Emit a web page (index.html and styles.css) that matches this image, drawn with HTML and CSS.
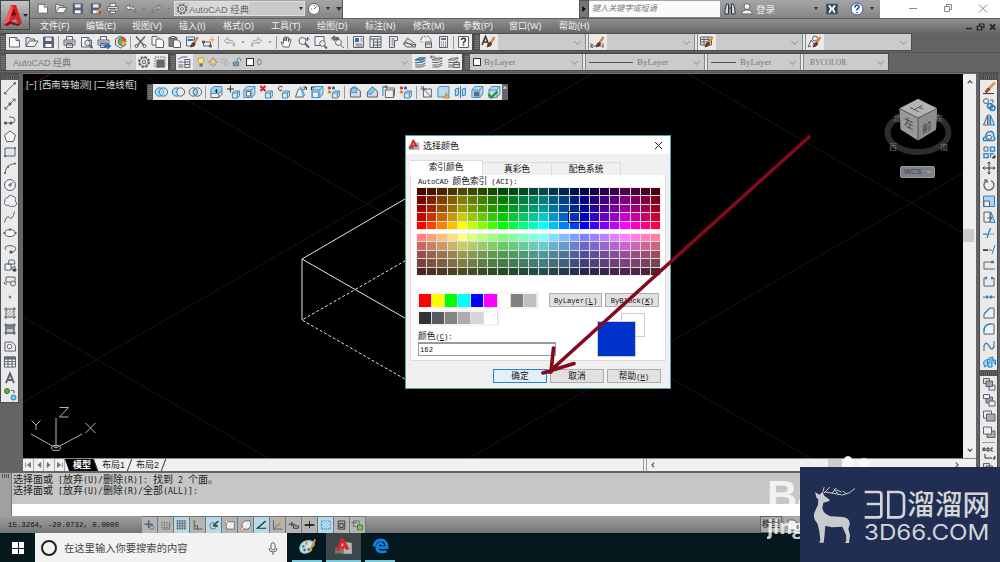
FILE: index.html
```
<!DOCTYPE html>
<html lang="zh-CN">
<head>
    <meta charset="UTF-8">
    <title>AutoCAD 经典</title>
    <link rel="stylesheet" href="styles.css">
</head>
<body>
    <div class="app">
        <header class="header">
            <div class="titlebar">
                <div class="quick" data-icons="new open save saveas print undoW caret redoG caret"></div>
                <div class="workspace"><span data-icons="gear"></span><span class="workspace-name">AutoCAD 经典</span><i class="tri"></i></div>
                <div class="quick-end"><span data-icons="compass"></span><i class="tri"></i><i class="tri big"></i></div>
                <div class="title-space"></div>
                <div class="search-arrow"><i></i></div>
                <div class="search">键入关键字或短语</div>
                <div class="account"><span data-icons="binocular user"></span><span class="login">登录</span><i class="tri"></i><span data-icons="exchange"></span><span class="help" data-icons="helpround"></span><i class="tri"></i></div>
                <div class="window-buttons" data-icons="min restore close"></div>
            </div>
            <nav class="menubar">
                <span>文件(F)</span><span>编辑(E)</span><span>视图(V)</span><span>插入(I)</span><span>格式(O)</span><span>工具(T)</span><span>绘图(D)</span><span>标注(N)</span><span>修改(M)</span><span>参数(P)</span><span>窗口(W)</span><span>帮助(H)</span>
                <div class="doc-buttons" data-icons="mini restore2 close2"></div>
            </nav>
            <div class="app-button">
                <svg width="29" height="30" viewBox="0 0 29 30"><path d="M3 24L10 4h5l6 18-4 1-2-5-6 2-1 4z" fill="#d8222a"/><path d="M10 4l2 2-5 18-4 0z" fill="#ff5a55"/><path d="M10 15l3-7 2 6z" fill="#5e0d12"/><path d="M3 24l6-4 8 3 4-1-4 3-8-2-2 2z" fill="#8e0c14"/><path d="M22 13h5l-2.500 3z" fill="#222"/></svg>
            </div>
        </header>

        <div class="toolrow">
            <div class="bar standard"><i class="grip"></i><div data-icons="new open save - print preview publish globe - cut copy paste brush block - undo caret redo caret - hand zoomrt zoomwin zoomprev - props center palette sheet markup calc - help"></div></div>
            <div class="bar styles"><i class="grip"></i><span data-icons="textstyle"></span><div class="combo"></div><i class="split"></i><span data-icons="dimstyle"></span><div class="combo"></div><i class="split"></i><span data-icons="tablestyle"></span><div class="combo"></div><i class="split"></i><span data-icons="leaderstyle"></span><div class="combo"></div></div>
        </div>
        <div class="toolrow">
            <div class="bar spaces"><i class="grip"></i><div class="combo">AutoCAD 经典</div><span data-icons="gear wssave"></span></div>
            <div class="bar layers"><i class="grip"></i><span data-icons="layerprops"></span><div class="combo"><span data-icons="bulb sun freeze lock"></span><i class="box"></i>0</div><span data-icons="layers layerprev layerstate"></span></div>
            <div class="bar object"><i class="grip"></i><div class="combo serif c1"><i class="box"></i>ByLayer</div><i class="split"></i><div class="combo serif c2"><i class="rule"></i>ByLayer</div><i class="split"></i><div class="combo serif c3"><i class="rule"></i>ByLayer</div><i class="split"></i><div class="combo serif c4">BYCOLOR</div></div>
        </div>

        <main class="workarea">
            <aside class="side left"><i class="side-grip"></i><div data-icons="line xline pline polygon rect arc circle cloud spline ellipse earc insert mkblock point hatch gradient region table mtext addsel"></div></aside>
            <section class="drawing">
                <svg class="model" width="940" height="384" viewBox="23 74 940 384">
                    <g class="guides">
                        <path d="M23 317L266 457M23 402L592 74M145 76L810 458M688 74L963 233M471 457L963 173"/>
                        <path d="M23 90L50 74" stroke="#6e1414"/>
                    </g>
                    <g fill="none" stroke="#e4e4e4">
                        <path d="M410 196L302 259V320M302 259L410 321"/>
                        <path d="M410 258L302 320L410 382" stroke-dasharray="3 2"/>
                    </g>
                    <g fill="none" stroke="#b4b4b4">
                        <path d="M56 418V448L82 434M56 448L31 434"/>
                        <ellipse cx="56" cy="448" rx="4.500" ry="2.600"/>
                        <path d="M59.500 407.500h9l-9 9.500h9M31.500 420.500l4.500 4.500l4.500-4.500M36 425v5M85.500 423l10 10M95.500 423l-10 10"/>
                    </g>
                    <g class="cube">
                        <ellipse cx="918" cy="132.500" rx="30.500" ry="19.500" fill="none" stroke="#2d2d2d" stroke-width="6"/>
                        <path d="M918 99l19 9.500-1 21-18 11-17.500-11-1-21z" fill="#999"/>
                        <path d="M918 99l19 9.500-19 9.500-18.500-9.500z" fill="#b2b2b2"/>
                        <path d="M918 118l19-9.500-1 21-18 11z" fill="#8d8d8d"/>
                        <path d="M899.500 108.500L918 118l19-9.500M918 118v22" fill="none" stroke="#555"/>
                        <text transform="matrix(.9 .45 -.9 .45 918 108)" x="-5.500" y="4">上</text>
                        <text transform="matrix(.86 .45 0 1 904 125)">左</text>
                        <text transform="matrix(.86 -.45 0 1 922 134)">前</text>
                        <g class="compass"><text x="889" y="150">西</text><text x="940" y="150">南</text><text x="893" y="121">北</text><text x="935" y="121">东</text></g>
                    </g>
                </svg>
                <span class="view-label">[−] [西南等轴测] [二维线框]</span>
                <span class="wcs">WCS<i></i></span>
                <div class="solid-bar"><i class="grip"></i><div data-icons="union subtract intersect - extrude movef offsetf delf rotf taperf copyf colorf - fillete chamfere copye colore - imprint clean separate shell check"></div><i class="solid-close">×</i></div>
            </section>
            <div class="vscroll"><span data-icons="up"></span><i></i><span data-icons="down"></span></div>
            <aside class="side right"><i class="side-grip"></i><div data-icons="erase copyobj mirror offset array move rotate scale stretch trim extend breakpt break join chamfer fillet blend explode"></div><i class="side-grip"></i><div data-icons="front back above under - abc front"></div></aside>
            <div class="tabs"><span class="nav"><b data-icons="first"></b><b data-icons="prev"></b><b data-icons="next"></b><b data-icons="last"></b></span><span class="tab active"><em>模型</em></span><span class="tab"><em>布局1</em></span><span class="tab"><em>布局2</em></span><div class="hscroll"><span data-icons="lt"></span><i></i><span data-icons="gt"></span></div></div>
        </main>

        <section class="command">
            <i class="command-grip"></i>
            <div class="history">
                <p>选择面或<b> [</b>放弃<b>(U)/</b>删除<b>(R)]: </b>找到<b> 2 </b>个面。</p>
                <p>选择面或<b> [</b>放弃<b>(U)/</b>删除<b>(R)/</b>全部<b>(ALL)]:</b></p>
            </div>
            <div class="prompt"></div>
        </section>

        <footer class="status">
            <span class="coords">15.3264, -20.0732, 0.0000</span>
            <div class="toggles" data-icons="infer snap grid* ortho polar* osnap 3dosnap otrack* ducs dyn lwt tpy* qp sc"></div>
            <span class="model-toggle">模型</span><span class="layout-toggle" data-icons="leaf"></span>
        </footer>

        <footer class="taskbar">
            <span class="start"><i></i><i></i><i></i><i></i></span>
            <div class="tasksearch"><i class="ring"></i>在这里输入你要搜索的内容<span data-icons="mic"></span></div>
            <span class="task" data-icons="paint"></span>
            <span class="task current" data-icons="acad"></span>
            <span class="task" data-icons="edge"></span>
        </footer>
    </div>

    <div class="dialog">
        <div class="dialog-title"><span data-icons="acad"></span>选择颜色<svg width="9" height="9" viewBox="0 0 9 9"><path d="M1 1l7 7M8 1L1 8" stroke="#222"/></svg></div>
        <div class="dialog-tabs"><span class="on">索引颜色</span><span>真彩色</span><span>配色系统</span></div>
        <div class="panel">
            <div class="aci-label"><b>AutoCAD </b>颜色索引<b> (ACI):</b></div>
            <div class="palette" id="paletteEven"></div>
            <div class="palette" id="paletteOdd"></div>
            <div class="pick-row">
                <div class="chips" id="chips"></div>
                <button><b>ByLayer(<u>L</u>)</b></button><button><b>ByBlock(<u>K</u>)</b></button>
            </div>
            <div class="lower">
                <div class="lower-left">
                    <div class="chips" id="grays"></div>
                    <label>颜色<b>(<u>C</u>):</b></label>
                    <div class="color-input"><b>162</b></div>
                </div>
                <div class="swatches"><i class="old"></i><i class="new"></i></div>
            </div>
        </div>
        <div class="actions"><button class="ok">确定</button><button>取消</button><button>帮助<b>(<u>H</u>)</b></button></div>
    </div>

    <svg class="arrow" width="280" height="250" viewBox="535 130 280 250"><path d="M809 137L676 257L549 372M553.500 348L551 372M543 373L574 363.500" fill="none" stroke="#830a1c" stroke-width="3.600" stroke-linecap="round"/></svg>

    <div class="paws"><i></i><i></i></div>
    <div class="baidu"><b>Ba</b><span>jing</span></div>
    <svg class="brand" width="200" height="95" viewBox="180 81 600 285">
        <rect x="180" y="81" width="600" height="285" fill="#202e54"/>
        <path d="M225 156l13 8 9-7 6 10 16 12-2 5-17 4-3 16c2 12 10 19 24 25l38 2c16 3 21 11 20 23l-4 12 5 20-3 23h-12l4-7-1-18-11-24-32 2-19-5-2 24-3 27h-13l3-9-3-25-6-24c-10-12-12-20-9-32l11-24 1-17-5-2z" fill="#c9cbcc"/>
        <path d="M247 161l5-18M252 159l17-17M256 156l24 4 27 5 22-7 15-12M276 160l12-15M295 163l-13-16M290 150l14 6M318 161l-9-8" fill="none" stroke="#c9cbcc" stroke-width="3" stroke-linecap="round"/>
        <g fill="none" stroke="#d3d5d6" stroke-width="8"><path d="M374 156h42q8 0 8 8v60q0 8-8 8h-42M380 192h44M445 156h30q17 0 17 17v42q0 17-17 17h-30z"/></g>
        <text x="502" y="226" textLength="248" lengthAdjust="spacingAndGlyphs" font-size="86">溜溜网</text>
        <text x="372" y="300" textLength="376" lengthAdjust="spacingAndGlyphs" font-size="63" class="site">3D66.COM</text>
    </svg>

    <script src="app.js"></script>
</body>
</html>
```
FILE: styles.css
```
* {
    box-sizing: border-box;
}

body {
    margin: 0;
    width: 1000px;
    height: 562px;
    overflow: hidden;
    position: relative;
    background: #646464;
    font-family: "Liberation Sans", "Noto Sans CJK SC", sans-serif;
    font-size: 9px;
    color: #222;
}

i, b, em {
    font-style: normal;
    font-weight: normal;
}

.app {
    display: grid;
    grid-template-rows: 33px 20px 20px 398px 45px 17px 29px;
    height: 562px;
}

[data-icons] {
    display: flex;
    align-items: center;
    flex: none;
}

.ico {
    display: block;
    flex: none;
    width: 16px;
    height: 16px;
    fill: none;
    stroke: #5c636e;
    stroke-width: 1;
}

.sep {
    flex: none;
    width: 1px;
    height: 13px;
    margin: 0 1.25px;
    background: #999;
}

.tri {
    flex: none;
    border: 2.5px solid transparent;
    border-top: 3px solid #333;
    border-bottom: 0;
}

/* title and menu */
.header {
    position: relative;
}

.titlebar {
    display: flex;
    height: 17.5px;
    background: linear-gradient(#a5a5a5, #858585);
}

.quick {
    width: 174px;
    padding-left: 34px;
}

.quick .ico {
    width: 17.6px;
    height: 15px;
}

.quick .ic-caret {
    width: 8px;
}

.quick .ic-new, .quick .ic-print {
    fill: #eee;
}

.workspace {
    width: 131px;
    height: 15px;
    margin-top: 1px;
    display: flex;
    align-items: center;
    background: #c9c9c9;
    border: 1px solid #e0e0e0;
    font-size: 9.3px;
    color: #6a6a6a;
    padding-right: 1px;
}

.workspace .ico {
    width: 14px;
}

.workspace-name {
    margin-right: auto;
    background: #d8d8d8;
    white-space: nowrap;
}

.quick-end {
    display: flex;
    align-items: center;
    width: 38px;
    gap: 4px;
    border-right: 1px solid #555;
    padding-left: 1px;
}

.big {
    border-width: 4px 3px 0;
    margin-left: 2px;
}

.title-space {
    width: 236px;
    background: #fff;
}

.search-arrow {
    width: 10px;
    background: #777;
    border: 1px solid #555;
    display: flex;
    align-items: center;
    justify-content: center;
}

.search-arrow i {
    border: 3px solid transparent;
    border-left: 4px solid #111;
    border-right: 0;
}

.search {
    width: 131px;
    margin: 1px 0;
    padding-left: 3px;
    line-height: 16px;
    font-size: 8.1px;
    font-style: italic;
    background: #fafafa;
    color: #777;
}

.account {
    display: flex;
    align-items: center;
    width: 160px;
    padding-left: 2px;
}

.account .ico {
    margin-right: 1px;
}

.login {
    width: 66px;
    color: #eee;
    font-size: 9.5px;
}

.account .tri {
    margin-right: 6px;
}

.help {
    margin: 0 4px 0 8px;
}

.window-buttons {
    flex: 1 !important;
    background: #fff;
    justify-content: space-around;
    padding: 0 0 2px 16px;
}

.window-buttons .ico {
    stroke: #888;
}

.menubar {
    height: 15.5px;
    display: grid;
    grid-template-columns: 46px 46px 47px 44px 48px 46px 48px 48px 50px 46px 50px 1fr auto;
    padding-left: 40px;
    align-items: center;
    line-height: 15px;
    color: #f2f2f2;
    border-top: 1px solid #606060;
    background: linear-gradient(#909090, #686868);
}

.menubar span {
    white-space: nowrap;
}

.doc-buttons {
    padding-right: 1px;
}

.doc-buttons .ico {
    width: 12px;
    stroke: #222;
}

.app-button {
    position: absolute;
    left: 0;
    top: 0;
    width: 30px;
    height: 30px;
    border: 1px solid #444;
    background: linear-gradient(#c5c5c5, #777);
}

/* docked toolbars */
.toolrow {
    display: flex;
    padding: 1px 0 2px;
    gap: 2px;
    border-bottom: 1px solid #555;
}

.bar {
    display: flex;
    align-items: stretch;
    height: 16px;
    background: #eaeaea;
    outline: 1px solid #4c4c4c;
    flex: none;
}

.grip {
    flex: none;
    width: 6px;
    background: repeating-linear-gradient(#5a5a5a 0 1px, #777 1px 2px);
    border: 1px solid #555;
}

.standard {
    width: 472px;
}

.standard .ico {
    width: 17px;
}

.standard .ic-caret {
    width: 10px;
}

.styles {
    width: 437px;
}

.styles [data-icons] {
    width: 18px;
}

.combo {
    flex: 1;
    min-width: 0;
    display: flex;
    align-items: center;
    background: #cbcbcb;
    color: #777;
    font-size: 9px;
    white-space: nowrap;
}

.combo::after {
    content: "";
    width: 4px;
    height: 4px;
    margin: 0 5px 2px auto;
    border: solid #a0a0a0;
    border-width: 0 1px 1px 0;
    transform: rotate(45deg);
}

.split {
    flex: none;
    width: 4px;
    border-left: 1px solid #888;
    border-right: 1px solid #888;
    background: #e8e8e8;
}

.spaces {
    width: 168px;
}

.spaces .combo {
    padding-left: 7px;
}

.layers {
    width: 292px;
}

.layers .combo .ico {
    width: 12px;
}

.layers .combo {
    padding-left: 2px;
}

.layers > [data-icons] .ico {
    width: 16.7px;
}

.box {
    width: 8px;
    height: 8px;
    border: 1px solid #333;
    background: #fff;
    margin: 0 3px;
}

.object {
    width: 424px;
}

.serif {
    font-family: "Liberation Serif", "Noto Sans CJK SC", serif;
}

.c1 {
    flex: 0 0 112px;
}

.c2 {
    flex: 0 0 118px;
}

.c3 {
    flex: 0 0 92px;
}

.c4 {
    padding-left: 6px;
    font-size: 7.6px;
}

.rule {
    width: 44px;
    height: 1px;
    margin: 0 4px 0 3px;
    background: #555;
}

.c3 .rule {
    width: 25px;
}

/* drawing area */
.workarea {
    display: grid;
    grid-template-columns: 23px 940px 13px 24px;
    grid-template-rows: 385px 13px;
}

.side {
    grid-row: 1 / 3;
    width: 17px;
    margin: 1px 0 0;
    align-self: start;
    background: #eaeaea;
    outline: 1px solid #4c4c4c;
    overflow: hidden;
}

.side [data-icons] {
    flex-direction: column;
}

.side .ico {
    height: 16.1px;
}

.side-grip {
    display: block;
    height: 6px;
    background: repeating-linear-gradient(90deg, #444 0 1px, #6c6c6c 1px 2px);
    border: 1px solid #585858;
    border-width: 2px 3px 1px;
}

.left {
    margin-left: 1px;
}

.right {
    grid-column: 4;
    grid-row: 1 / 3;
    margin-left: 4px;
    height: 397px;
}

.side .sep {
    width: 13px;
    height: 1px;
    margin: 2px 0;
}

.drawing {
    position: relative;
    background: #000;
    border-top: 1px solid #777;
}

.model {
    display: block;
}

.guides {
    fill: none;
    stroke: #15151a;
}

.cube text {
    font-size: 11px;
    fill: #3a3a3a;
}

.cube .compass text {
    font-size: 8px;
    fill: #777;
}

.view-label {
    position: absolute;
    left: 3px;
    top: 3px;
    font-size: 9.4px;
    color: #d8d8d8;
}

.wcs {
    position: absolute;
    left: 877px;
    top: 92px;
    width: 35px;
    height: 12px;
    padding-left: 3px;
    line-height: 10px;
    font-size: 7.5px;
    color: #3c3c44;
    background: #7d7f89;
    border: 1px solid #999ba5;
    border-radius: 2px;
}

.wcs i {
    display: inline-block;
    margin-left: 4px;
    border: 3px solid transparent;
    border-top-color: #999;
    border-bottom: 0;
}

.solid-bar {
    position: absolute;
    left: 124px;
    top: 10px;
    display: flex;
    height: 16px;
    width: 361px;
    background: #eaeaea;
}

.solid-bar .ico {
    width: 16.8px;
}

.solid-bar .sep {
    margin: 0 1.75px;
}

.solid-close {
    margin-left: auto;
    width: 6px;
    background: #666;
    color: #fff;
    line-height: 7px;
    font-size: 8px;
}

.vscroll {
    background: #efefef;
    display: grid;
    grid-template-rows: 155px 13px 1fr;
    grid-column: 3;
    margin-top: 1px;
}

.vscroll span {
    align-self: start;
    justify-content: center;
}

.vscroll span:last-child {
    align-self: end;
}

.vscroll .ico {
    width: 12px;
}

.vscroll i {
    width: 11px;
    background: #cbcbcb;
}

.tabs {
    grid-column: 2 / 4;
    grid-row: 2;
    display: flex;
    background: #f0f0f0;
    border-top: 1px solid #888;
    line-height: 12px;
}

.nav {
    display: flex;
    width: 44px;
}

.nav b {
    width: 10.5px;
    border-right: 1px solid #aaa;
}

.nav .ico {
    width: 10px;
    height: 12px;
}

.tab {
    width: 34px;
    padding-left: 2px;
    border-right: 1px solid #333;
    transform: skewX(-20deg);
    white-space: nowrap;
}

.tab em {
    display: block;
    transform: skewX(20deg);
    text-align: center;
}

.tab.active {
    width: 29px;
    background: #000;
    color: #fff;
    transform: skewX(20deg);
}

.tab.active em {
    transform: skewX(-20deg);
    font-weight: bold;
}

.hscroll {
    display: flex;
    align-items: center;
    width: 333px;
    margin-left: auto;
    border-left: 4px double #999;
    padding-right: 13px;
}

.hscroll i {
    width: 14px;
    height: 12px;
    margin: 0 auto 0 169px;
    background: #ccc;
}

.hscroll .ico {
    width: 12px;
}

/* command line */
.command {
    display: grid;
    grid-template-columns: 12px 1fr;
    grid-template-rows: 31px 12px;
    padding-top: 2px;
    background: #666;
}

.command-grip {
    grid-row: 1 / 3;
    background: #a0a0a0;
    border-right: 1px solid #777;
}

.command-grip::before {
    content: "";
    display: block;
    height: 4px;
    margin: 1px 2px;
    background: repeating-linear-gradient(90deg, #555 0 1px, transparent 1px 2px);
}

.history {
    background: #c6c6c6;
    padding: 1px;
    font-size: 10px;
    line-height: 11px;
}

.history p {
    margin: 0;
    white-space: pre;
    height: 11px;
}

.history b {
    font-family: "DejaVu Sans Mono", monospace;
    font-size: 8.3px;
}

.prompt {
    background: #fff;
}

.status {
    display: flex;
    align-items: center;
    background: linear-gradient(#a0a0a0, #747474);
}

.coords {
    width: 142px;
    padding-left: 8px;
    font: 7.4px "Liberation Mono", monospace;
    color: #111;
}

.toggles .ico {
    height: 17px;
    padding: 1px;
    background: #b4b4b4;
    border: 1px solid #777;
    border-width: 1px 1px 0 0;
}

.toggles .on {
    background: #b6dbe6;
}

.model-toggle {
    margin-left: 394px;
    width: 22px;
    border: 1px solid #666;
    background: #aaa;
    padding-left: 1px;
    line-height: 15px;
    white-space: nowrap;
}

.layout-toggle {
    background: #aaa;
    margin-left: 2px;
}

/* windows taskbar */
.taskbar {
    display: flex;
    align-items: stretch;
    background: #04181d;
}

.start {
    display: grid;
    grid-template-columns: 5.5px 5.5px;
    grid-template-rows: 5.5px 5.5px;
    gap: 1px;
    width: 35px;
    padding: 9px 0 0 12px;
}

.start i {
    background: #fff;
}

.tasksearch {
    display: flex;
    align-items: center;
    width: 252px;
    background: #f2f2f2;
    padding: 0 6px 0 6px;
    font-size: 10.3px;
    color: #444;
}

.tasksearch span {
    margin-left: auto;
}

.ring {
    width: 16px;
    height: 16px;
    margin-right: 7px;
    border: 2.5px solid #222;
    border-radius: 50%;
}

.task {
    width: 30px;
    margin-left: 5px;
    justify-content: center;
    border-bottom: 2px solid #76cbdc;
}

.task.current {
    width: 35px;
    margin: 0 -1px 0 4px;
    background: #3d474a;
}

.task .ico {
    width: 19px;
    height: 19px;
}

/* color dialog */
.dialog {
    position: absolute;
    left: 405px;
    top: 135px;
    width: 266px;
    height: 254px;
    background: #f0f0f0;
    border: 1px solid #4aa3ab;
    font-size: 8.7px;
    color: #111;
}

.dialog b {
    font-family: "Liberation Mono", monospace;
    font-size: 7.2px;
    white-space: pre;
}

.dialog-title {
    display: flex;
    align-items: center;
    height: 18px;
    padding: 0 7px 0 2px;
    background: #fff;
    font-size: 9px;
}

.dialog-title .ico {
    width: 12px;
    height: 12px;
    margin-right: 3px;
}

.dialog-title > svg {
    margin-left: auto;
}

.dialog-tabs {
    display: flex;
    align-items: flex-end;
    margin: 6px 0 0 4px;
    height: 15px;
}

.dialog-tabs span {
    width: 69px;
    height: 13px;
    line-height: 12px;
    text-align: center;
    border: 1px solid #dcdcdc;
    border-left: 0;
    border-bottom: 0;
}

.dialog-tabs .on {
    width: 73px;
    height: 15px;
    background: #fff;
}

.panel {
    width: 256px;
    height: 186px;
    margin-left: 4px;
    padding: 0 6px;
    background: #fff;
    border: 1px solid #dcdcdc;
    border-top: 0;
}

.aci-label {
    height: 13px;
    padding-left: 1px;
    line-height: 12px;
}

.palette {
    display: grid;
    grid-template-columns: repeat(24, 1fr);
    grid-template-rows: repeat(5, 1fr);
    gap: 1px;
    width: 243px;
    height: 41px;
    margin-bottom: 5px;
    background: #ddd;
    outline: 1px solid #f1f1f1;
}

.palette .picked {
    outline: 1.5px solid #111;
    outline-offset: 1px;
    box-shadow: 0 0 0 1px #ddd;
    z-index: 1;
}

.pick-row {
    display: flex;
    margin-top: 17px;
    align-items: center;
    gap: 3px;
}

.chips {
    display: flex;
    padding: 2px;
    background: #f4f4f4;
    width: max-content;
}

.chips i {
    width: 13.1px;
    height: 12.5px;
    border-right: 1px solid #ddd;
}

.pick-row .chips {
    margin-right: 7px;
}

.dialog button {
    width: 54px;
    height: 14px;
    padding: 0;
    border: 1px solid #adadad;
    background: #e1e1e1;
    color: #111;
    font-family: inherit;
    font-size: 8.7px;
    line-height: 12px;
    white-space: nowrap;
}

.lower {
    display: flex;
    justify-content: space-between;
}

.lower-left {
    padding-top: 1px;
}

.lower-left label {
    display: block;
    margin: 5px 0 0 1px;
    height: 10px;
    line-height: 11px;
}

.color-input {
    width: 138px;
    height: 14px;
    margin: 1px 0 0 1px;
    padding-left: 1px;
    border: 1px solid #999;
    border-width: 2px 1px 1px;
    line-height: 10px;
}

.swatches {
    display: grid;
    width: 48px;
    margin: 4px 14px 0 0;
    height: 44px;
}

.swatches i {
    grid-area: 1 / 1;
    border: 1px solid #ccc;
}

.swatches .old {
    width: 24px;
    height: 24px;
    margin-left: 24px;
}

.swatches .new {
    align-self: end;
    width: 39px;
    height: 36px;
    background: #0033cc;
}

.actions {
    display: flex;
    gap: 3px;
    margin: 8px 0 0 87px;
}

.dialog button.ok {
    border-color: #2684d8;
    background: #e3f0fa;
}

/* overlays */
.arrow {
    position: absolute;
    left: 535px;
    top: 130px;
}

.paws {
    position: absolute;
    left: 842px;
    top: 456px;
    display: flex;
    gap: 4px;
}

.paws i {
    width: 12px;
    height: 20px;
    border-radius: 50%;
    background: #f8f8f8;
}

.paws i + i {
    margin-top: 2px;
}

.baidu {
    position: absolute;
    left: 767px;
    top: 475px;
    width: 33px;
    height: 80px;
    overflow: hidden;
    color: rgba(255, 255, 255, 0.8);
}

.baidu b {
    display: block;
    font-size: 42px;
    line-height: 42px;
    font-weight: bold;
}

.baidu span {
    display: block;
    font: bold 20px/20px "Open Sans", sans-serif;
}

.brand {
    position: absolute;
    left: 800px;
    top: 467px;
}

.brand text {
    font-family: "Noto Sans CJK SC", sans-serif;
    font-weight: 500;
    fill: #d3d5d6;
}

.brand .site {
    font-family: "Inter", sans-serif;
    font-weight: 400;
}
```
FILE: app.js
```
// Icon drawings on a 16 x 16 grid
const B = 'stroke="#2484c6"';
const cube = '<path d="M7 9h5v5H7zM7 9l2-2h5l-2 2M14 7v5l-2 2" fill="#cfe9fa" stroke="#4a86ae"/>';
const block = '<path d="M2.500 6h8v7.500h-8zM2.500 6l3-3.500h8L10.500 6M13.500 2.500V10l-3 3.500" fill="#b5dcf5" stroke="#4a8fbd"/>';
const brush = '<path d="M14.500 3l-4 6" stroke="#d58b43" stroke-width="2.400"/><path d="M7 13q1-5 4-4.500q2 3-4 4.500" fill="#70351b" stroke="#70351b"/>';
const dots = '<path d="M3 3h2v2H3z" stroke="#c33" fill="#c33"/><path d="M7 3h2v2H7z" stroke="#36a" fill="#36a"/><path d="M3 7h2v2H3z" stroke="#d80" fill="#d80"/>';
const page = '<path d="M3 3.500h6.500l3.500 3v6.500H3z" fill="#fafafa"/><path d="M9.500 3.500v3H13"/>';
const disk = '<path d="M3 3h10v10.500H3z" fill="#566277"/><path d="M5 3.500h6V7H5z" fill="#e8e8e8" stroke="none"/><path d="M5 10h6v3H5z" fill="#fff" stroke="none"/>';
const printer = '<path d="M5 6V2.500h6V6M2.500 6h11v5h-11zM5 9.500h6v4H5z" fill="#eee"/><path d="M3.500 8h9"/>';
const lens = '<circle cx="7" cy="7" r="3.500" fill="#eef6fa"/><path d="M9.500 9.500l4 4" stroke-width="2"/>';
const layer = '<path d="M3 6l4-2h6l-4 2zM3 8.500h6l4-2M3 11h6l4-2M3 13h6l4-2"/>';
const undoPath = 'M6.500 3.500L3 7l3.500 3V8.500c4 0 5.500 1 6 4c1-4-1-6.500-6-6.500z';
const redoPath = 'M9.500 3.500L13 7l-3.500 3V8.500c-4 0-5.500 1-6 4c-1-4 1-6.500 6-6.500z';
const gearShape = '<circle cx="8" cy="8" r="5" stroke-dasharray="2.300 1.600" stroke-width="2"/><circle cx="8" cy="8" r="4.200" fill="#e4e6e9"/><circle cx="8" cy="8" r="1.700"/>';

const icons = {
    new: page,
    open: '<path d="M2.500 12.500v-9h3.500l1 1.500h4v2" fill="#ddd"/><path d="M2.500 12.500L6 7h8.500L11 12.500z" fill="#f4f4f4"/>',
    save: disk,
    saveas: disk + '<path d="M14 7l-5 6" stroke="#e59a35" stroke-width="2"/>',
    print: printer,
    undoW: `<path d="${undoPath}" fill="#eee"/>`,
    redoG: `<path d="${redoPath}" fill="#aaa" stroke="#777"/>`,
    undo: `<path d="${undoPath}" stroke="#999"/>`,
    redo: `<path d="${redoPath}" stroke="#999"/>`,
    caret: '<path d="M5.500 7h5L8 9.500z" fill="#666" stroke="none"/>',
    gear: gearShape,
    compass: '<circle cx="8" cy="8" r="5.500" fill="#fff"/><path d="M8 8l3-3M5 8h1M8 4v1"/>',
    binocular: '<path d="M3 13V9l1.500-6h2v10zM13 13V9l-1.500-6h-2v10zM6.500 7h3" fill="#d5dae2" stroke="#2b3542"/>',
    user: '<circle cx="8" cy="5.500" r="3" fill="#eee"/><path d="M2.500 13q0-3.500 4-4h3q4 .500 4 4z" fill="#eee"/>',
    exchange: '<path d="M2.500 3h11v10h-11z" fill="#33415c"/><path d="M5 4.500Q9 8 5 11.500M11 4.500Q7 8 11 11.500" stroke="#fff" stroke-width="2"/>',
    helpround: '<circle cx="8" cy="8" r="6" fill="#fff" stroke="#35579d"/><path d="M6 6.500q0-2.500 2-2.500t2 2q0 1-2 2.500v1M8 11v1.300" stroke="#2452a4" stroke-width="1.600"/>',
    min: '<path d="M4 8.500h8"/>',
    restore: '<path d="M4.500 6.500h5v5h-5zM6.500 6.500v-2h5v5h-2"/>',
    close: '<path d="M4 4.500l8 8M12 4.500l-8 8"/>',
    mini: '<path d="M4 10h8" stroke-width="2"/>',
    restore2: '<path d="M3 7h6v5H3zM6 7V4h6v5H9" stroke-width="1.600"/>',
    close2: '<path d="M4 4.500l7 7M11 4.500l-7 7" stroke-width="2.400"/>',
    preview: page + '<circle cx="9" cy="9" r="2.700" fill="#dcebf2"/><path d="M11 11l3 3" stroke-width="1.800"/>',
    publish: printer + '<path d="M8 12h6M11.500 9.500L14.500 12l-3 2.500" stroke="#1b74c5" stroke-width="1.800"/>',
    globe: '<path d="M3 5l5-3 5 3v6l-5 3-5-3z" fill="#e6e9ed"/><circle cx="9.500" cy="7.500" r="4" fill="#5dbb51"/><path d="M9.500 7.500V3.500a4 4 0 0 1 4 4z" fill="#e74a3b" stroke="none"/><path d="M9.500 7.500h4a4 4 0 0 1-4 4z" fill="#f0b73a" stroke="none"/>',
    cut: '<path d="M3.500 2.500l8 9M12.500 2.500l-8 9" stroke-width="1.500"/><circle cx="4" cy="12" r="1.500"/><circle cx="12" cy="12" r="1.500"/>',
    copy: '<path d="M2.500 2.500h5l2 2V11h-7z" fill="#f5f5f5"/><path d="M6.500 5h5l2.500 2v6.500H6.500z" fill="#fff"/>',
    paste: '<path d="M2.500 3.500h8v9h-8z" fill="#8b7a67"/><path d="M4.500 2.500h4v2h-4z" fill="#ddd"/><path d="M7 6h4l3 2v5.500H7z" fill="#fff"/>',
    brush: '<path d="M3 3h8v9H3z" fill="#e9f3fa"/><path d="M4 5h6v2H4z" fill="#2b73b8" stroke="none"/>' + brush,
    block: '<path d="M3 8h7v4H3z"/><path d="M2 7h2v2H2zM9 11h2v2H9z" fill="#555"/><path d="M12.500 1.500L9 6.500h3l-1 3.500 3.500-5h-3z" fill="#f5ad31" stroke="none"/>',
    hand: '<path d="M5 13L2.500 8.500q1-1 2.500 1V4q1-1 1.500 0v3V3q1-1 1.500 0v4l.500-3.500q1-1 1.500 0V8l1-3q1.500-.500 1.500 1l-2 7z" fill="#fff"/>',
    zoomrt: lens + '<path d="M12 3v4M10 5h4"/>',
    zoomwin: '<path d="M2.500 2.500h9v9h-9z" fill="#f2f2f2"/><circle cx="10" cy="9.500" r="2.800" fill="#eee"/><path d="M12 12l2.500 2.500" stroke-width="2"/>',
    zoomprev: '<circle cx="9" cy="8.500" r="3" fill="#eee"/><path d="M11 11l3.500 3M2 4l3-2v1.500h4v2H5V7z" fill="#777"/>',
    props: '<path d="M3 2.500h10v11H3z" fill="#f6f6f6"/><path d="M4.500 4h4v4h-4z" fill="#2875b8" stroke="none"/><path d="M10 5h2M10 7h2M5 10h7M5 12h7"/>',
    center: '<path d="M2.500 2.500h11v11h-11zM2.500 5h11M6 5v8.500M6 8h7.500M6 11h7.500M10 5v8.500"/>',
    palette: '<path d="M5 2.500h8v4h-3v7H5zM7 5h3M7 7h2M7 9h2M7 11h2"/>',
    sheet: '<path d="M2 10l4-6 8 6v3H5zM2 10l3-1 9 2M4 8l8 4" fill="#ddd"/>',
    markup: '<path d="M3 4q2-3 4-1q3-2 4 1q3 1 1 3M3 4q-2 3 1 5" stroke-dasharray="2 1"/><path d="M7 8h6v5.500H7zM7 10h6" fill="#ddd"/>',
    calc: '<path d="M4 2.500h8v11H4z" fill="#eee"/><path d="M5.500 5h5" stroke-width="1.800"/><path d="M5.500 8h5M5.500 10h5M5.500 12h5" stroke-dasharray="1 1"/>',
    help: '<path d="M3 2.500h10v11H3z" fill="#f6f6f6"/><path d="M6 6q0-1.700 2-1.700T10 6q0 1-2 2.500v1M8 10.500v1.300" stroke="#333" stroke-width="1.500"/>',
    textstyle: '<path d="M2 11L5.500 2.500 9 11M3.500 8h4" stroke="#333" stroke-width="1.600"/>' + brush,
    dimstyle: '<path d="M2 9v5M14 9v5M2 12h12M4 10l-2 2 2 2"/>' + brush,
    tablestyle: '<path d="M2.500 3h11v8h-11zM2.500 5.500h11M2.500 8h11M6 3v8M10 3v8"/>' + brush,
    leaderstyle: '<path d="M2 13L5 6l4 5M2 13l3-1"/><circle cx="9" cy="4.500" r="2.500"/>' + brush,
    wssave: '<path d="M3 3h10v10H3z" stroke-dasharray="1.500 1"/><path d="M5 6h7v7H5z" fill="#666"/>',
    layerprops: '<path d="M2 5l4-2h5M2 8h5M2 11h5M2 13h5"/><path d="M8.500 5.500h5v8h-5zM8.500 8h5M8.500 10.500h5" fill="#dbeef9"/>',
    bulb: '<circle cx="8" cy="6" r="4" fill="#ffe287" stroke="#b28838"/><path d="M6.500 11h3v2.500h-3z" fill="#777"/>',
    sun: '<circle cx="8" cy="8" r="3" fill="#ffe184" stroke="#b28838"/><path d="M8 2v2M8 12v2M2 8h2M12 8h2M4 4l1 1M11 11l1 1M12 4l-1 1M4 12l1-1" stroke="#555"/>',
    freeze: '<path d="M3 4h6v5H3z" stroke="#aaa"/><circle cx="10" cy="10" r="3" stroke="#aaa"/>',
    lock: '<path d="M3 8h7v5H3z" fill="#58acd4"/><path d="M8 8V4q3-3 5 0v3"/>',
    layers: layer + '<path d="M3 6l4-2h6l-4 2zM3 9l6-1 4-2" fill="#5ba9dc" stroke="#2774a5"/>',
    layerprev: layer + '<path d="M1 3h5M1 3l2-1.500M1 3l2 1.500"/>',
    layerstate: layer + '<path d="M8.500 8.500h5.500v5H8.500zM8.500 10.500H14" fill="#ddd"/>',
    line: '<path d="M3 13L13 3M2.500 12.500h1.500V14H2.500zM12 2.500h1.500V4H12z"/>',
    xline: '<path d="M3 13L13 3M3 10.500V13h2.500M10.500 3H13v2.500"/><path d="M7 7h2v2H7z" fill="#555"/>',
    pline: '<path d="M3 11h6q4 0 4-3t-4-3H7"/><path d="M2.500 10h2v2h-2zM8 10h2v2H8z" fill="#555"/>',
    polygon: '<path d="M8 3l5.500 4-2 6.500h-7L2.500 7z" fill="#f4f6f8"/>',
    rect: '<path d="M3 4h10v8H3z" fill="#e2e7ee"/><path d="M2.500 11.500h1v1h-1zM12.500 3.500h1v1h-1z" fill="#555"/>',
    arc: '<path d="M3 13Q4 4 13 3.500"/><path d="M2.500 12.500h1v1h-1zM12.500 3h1v1h-1zM5.500 6.500h1v1h-1z" fill="#555"/>',
    circle: '<circle cx="8" cy="8" r="5.500" fill="#f4f6f8"/><path d="M8 8l3-3M7 7h2v2H7z"/>',
    cloud: '<path d="M6 4.500a2.700 2.700 0 0 1 5-1a2.700 2.700 0 0 1 2 4.500a2.700 2.700 0 0 1-2.500 5a2.700 2.700 0 0 1-4-1a2.700 2.700 0 0 1-3.500-4a2.700 2.700 0 0 1 3-3.500z" fill="#eff2f5"/>',
    spline: '<path d="M2.500 13.500q2-8 5-5t5-6"/>',
    ellipse: '<ellipse cx="8" cy="8" rx="5.500" ry="3.500" fill="#f7f7f7"/><path d="M1.500 8h2M12.500 8h2M7 4.500h2" stroke-width="2"/>',
    earc: '<path d="M4 9q-3-4 4-4.500q8 1 5 5q-2 2-4 2"/><path d="M8 10h2v2H8z" fill="#555"/>',
    insert: '<path d="M7 3h5l1 4H6zM3 7h6v6H3zM9 11l4 3V9z" fill="#edf1f5"/><path d="M11 12h3v2h-3z" fill="#111"/>',
    mkblock: '<path d="M4 4h9v5H4zM2.500 9v2H5"/><circle cx="11" cy="10.500" r="2.500" fill="#eee"/>',
    point: '<circle cx="8" cy="8" r="1" fill="#777" stroke="#777"/>',
    hatch: '<path d="M2 4h12M2 12h12M4 2v12M12 2v12"/><path d="M4 7l3-3M4 10l6-6M5 12l7-7M8 12l4-4" stroke="#999"/>',
    gradient: '<path d="M4 4h8v8H4z" fill="#c9ced4"/><path d="M2 4h12M2 12h12M4 2v12M12 2v12"/><path d="M4 5h8v3H4z" fill="#727d8a" stroke="none"/>',
    region: '<path d="M3 4h7l3.500 4v5H3z" fill="#eef1f4"/><circle cx="7.500" cy="8.500" r="2.300" fill="#fff"/>',
    table: '<path d="M2.500 3h11v10h-11zM2.500 7.500h11M2.500 10h11M6 5v8M10 5v8" fill="#fff"/><path d="M2.500 3h11v2h-11z" fill="#6e7784"/>',
    mtext: '<path d="M4 13L8 3.500 12 13M5.500 10h5" stroke-width="1.900"/>',
    addsel: '<circle cx="5" cy="5" r="2.500" fill="#67a942" stroke="#39751e"/><circle cx="11.500" cy="11.500" r="2.500" fill="#82c7f2" stroke="#267ab2"/><path d="M9 4.500h3v3"/>',
    union: `<g ${B}><circle cx="6" cy="8" r="4.200" fill="#b6dbef"/><circle cx="10" cy="8" r="4.200" fill="#b6dbef" fill-opacity=".5"/></g>`,
    subtract: `<circle cx="10" cy="8" r="4.200"/><path d="M8 4.300a4.200 4.200 0 1 0 0 7.400a5 5 0 0 1 0-7.400" fill="#b6dbef" ${B}/>`,
    intersect: `<circle cx="6" cy="8" r="4.200"/><circle cx="10" cy="8" r="4.200"/><path d="M8 4.500q4 3.500 0 7q-4-3.500 0-7" fill="#b6dbef" ${B}/>`,
    extrude: '<path d="M2.500 9h8v4.500h-8zM10.500 9l3-3v4.500l-3 3" fill="#eef1f4"/><path d="M2.500 5.500l3-3h8v4l-3 3h-8z" fill="#9fd3f5" stroke="#4a8fbd"/><path d="M8 5v4M6.500 7h3" stroke="#222"/>',
    movef: cube + '<path d="M1.500 5h7M5 1.500v7" stroke="#222"/>',
    offsetf: block + '<path d="M5 7.500h4V12H5z" fill="#fff"/>',
    delf: cube + '<path d="M2 2l5 5M7 2L2 7" stroke="#d2211e" stroke-width="2"/>',
    rotf: cube + '<path d="M7 3q-4-2-4 2q1 3 4 1" stroke="#333"/>',
    taperf: '<path d="M3 13l3-8h4l1 8z" fill="#eef1f4"/><path d="M8 3l4 9" stroke="#5fb0e6" stroke-width="2.500"/><path d="M11 3h3v3M14 3l-3 3" stroke="#333"/>',
    copyf: block + '<path d="M3 8h6v5.500H3z" fill="#e7f4fc" stroke="#4a8fbd"/><path d="M2 6V3h3" stroke="#222"/>',
    colorf: cube + dots,
    fillete: '<path d="M3 13V7q0-4 5-4l5 4v6z" fill="#d4dbe2"/><path d="M3 8q1-5 6-4v5z" fill="#8cc9f0" stroke="#4a8fbd"/>',
    chamfere: '<path d="M3 13V8l5-5 5 4v6z" fill="#d4dbe2"/><path d="M3 8l5-5 3 2-5 6z" fill="#8cc9f0" stroke="#4a8fbd"/>',
    copye: '<path d="M5 6h8v7.500H5zM5 6l2-2h7v7l-1 2.500" fill="#eef1f4"/><path d="M2.500 4v8" stroke="#2484c6"/><path d="M2 3h5M5 1.500L7 3" stroke="#222"/>',
    colore: cube + dots,
    imprint: '<path d="M5 5h8v8H5z" fill="#eef1f4"/><path d="M2 2l11 11M5 2v5M2 5h6"/>',
    clean: '<path d="M2.500 4l2-1.500h9v9l-2 1.500h-9z" fill="#b4dcf4" stroke="#4a8fbd"/><path d="M11 8v3M9.500 11h3.500l1 3H8.500z" fill="#edb43b" stroke="#c58b2c"/>',
    separate: `<path d="M6 4L3 5v7l3-1zM13 4l-3 1v7l3-1z" fill="#b4dcf4" ${B}/><path d="M8 2v12"/>`,
    shell: block + '<path d="M5 8h4v4H5z" fill="#397ba7"/>',
    check: block + '<path d="M2 10l3 3.500 6-6" stroke="#31942f" stroke-width="2.300"/>',
    up: '<path d="M5 9.500l3-3 3 3" stroke="#444" stroke-width="1.700"/>',
    down: '<path d="M5 6.500l3 3 3-3" stroke="#444" stroke-width="1.700"/>',
    lt: '<path d="M9.500 5l-3 3 3 3" stroke-width="1.600"/>',
    gt: '<path d="M6.500 5l3 3-3 3" stroke-width="1.600"/>',
    erase: '<path d="M14 2.500L7 9.500" stroke="#d2a15e" stroke-width="3"/><path d="M7 8l-3 3.500 2 1 3-3z" fill="#d94936" stroke="#842d23"/><path d="M2 13.500h11" stroke="#333"/>',
    copyobj: `<circle cx="5" cy="5" r="2.500"/><path d="M9 4h3v3"/><g ${B} stroke-width="1.500"><circle cx="9" cy="10" r="2.500"/><circle cx="11.500" cy="12" r="2.500"/></g>`,
    mirror: `<path d="M6.500 3v10H2.500z" fill="#ddd"/><path d="M9.500 3v10h4z" fill="#b4dcf4" ${B}/><path d="M8 2v12"/>`,
    offset: `<path d="M2.500 12.500q-1-3 2-3.500q1-6 5-5.500t3 5q3 2 0 4z" fill="#dcebf3" ${B} stroke-width="1.500"/><path d="M5 11q1-5 4-4t1 4z"/>`,
    array: `<path d="M3 3h4v4H3z"/><path d="M9.500 3h4v4h-4zM3 9.500h4v4H3zM13 9.500H9.500v4" fill="#d5ebf8" ${B} stroke-width="1.300"/><path d="M11 14l3-3v3z" fill="#111"/>`,
    move: '<path d="M8 2v4M8 10v4M2 8h4M10 8h4M6.500 3.500L8 2l1.500 1.500M6.500 12.500L8 14l1.500-1.500M3.500 6.500L2 8l1.500 1.500M12.500 6.500L14 8l-1.500 1.500M7 7h2v2H7z" stroke="#333"/>',
    rotate: '<path d="M5 4a5 5 0 1 0 5-.500M3 3h3v3" stroke-width="1.300"/>',
    scale: `<path d="M2.500 3h11v10.500h-11z" fill="#a8d7f5" ${B}/><path d="M3 8h5.500v5.500H3z" fill="#eee"/>`,
    stretch: `<path d="M10 3l4 10.500H9z" fill="#b4dcf4" ${B}/><path d="M3 3h6v10H3z" fill="#edf1f4"/><path d="M6 9h5M9 7l2 2-2 2"/>`,
    trim: `<path d="M9.500 3L6 13M2 9h5" ${B} stroke-width="1.300"/><path d="M9 9h5" stroke-dasharray="1.500 1"/>`,
    extend: `<path d="M2 9h5" stroke="#222" stroke-width="1.500"/><path d="M8 9h3M14 4l-3 9" ${B}/>`,
    breakpt: `<path d="M13 5H3v7h11"/><path d="M10 5h3" ${B} stroke-width="2.500"/>`,
    break: `<path d="M5 5H3v8h10V5h-2"/><path d="M4 5h2M10 5h2" ${B} stroke-width="2.500"/>`,
    join: `<path d="M2 8h12"/><path d="M5 8h2M9 8h2" ${B} stroke-width="3"/>`,
    chamfer: `<path d="M3 13V9l6-6h4v10z" fill="#edf1f4"/><path d="M3 9l6-6" ${B} stroke-width="1.400"/>`,
    fillet: `<path d="M3 13v-3q0-7 7-7h3v10z" fill="#edf1f4"/><path d="M3 10q0-7 7-7" ${B} stroke-width="1.400"/>`,
    blend: `<path d="M3 13V7M13 9V3"/><path d="M3 8q2-6 5 0t5 0" ${B} stroke-width="1.300"/>`,
    explode: `<path d="M2.500 8l4-3v6l-3 2zM7 8h4v5H7zM8 4l4-1v3H8zM11.500 6h3v5z" fill="#9cd2f3" ${B}/>`,
    front: '<path d="M2.500 2.500h6v5h-6z" fill="#ddd"/><path d="M8 9h6v5H8z" fill="#eee"/><path d="M5 5h6.500v5.500H5z" fill="#9aa2ac"/>',
    back: '<path d="M5 5h6.500v6H5z" fill="#9aa2ac"/><path d="M2.500 2.500h6v4h-6zM8 9h6v5H8z" fill="#eee"/>',
    above: '<path d="M2.500 3h8v7h-8z" fill="#eee"/><path d="M5.500 6h8.500v7H5.500z" fill="#a4abb4"/>',
    under: '<path d="M6 7h8v6.500H6z" fill="#a4abb4"/><path d="M2.500 3h8v7h-8z" fill="#eee"/>',
    abc: '<path d="M2 6V3h2v3M2 5h2M6 3h2v3H6zM12 3h-2v3h2M4 9v4h7" stroke="#333"/><path d="M12 14l2-3v3z" fill="#111"/>',
    first: '<path d="M4 4v8M12 4L7 8l5 4z" fill="#777"/>',
    prev: '<path d="M11 4L6 8l5 4z" fill="#777"/>',
    next: '<path d="M5 4l5 4-5 4z" fill="#777"/>',
    last: '<path d="M12 4v8M4 4l5 4-5 4z" fill="#777"/>',
    infer: '<path d="M2 7h10M7 2v10" stroke-width="2"/><circle cx="11" cy="11" r="2.500" stroke="#3978ad"/>',
    snap: '<path d="M3 5h9M3 8h9M3 11h9" stroke="#444" stroke-dasharray="1.500 1.500"/><path d="M13 4v9H4"/>',
    grid: '<path d="M2 3h12M2 6h12M2 9h12M2 12h12M3 2v12M6 2v12M9 2v12M12 2v12"/>',
    ortho: '<path d="M4 2v11h10M4 9h4v4" stroke="#444"/>',
    polar: '<circle cx="7.500" cy="9" r="4"/><path d="M7.500 9L14 3M7.500 9h6" stroke="#173344" stroke-width="1.500"/>',
    osnap: '<path d="M4 4h10v9H4z" fill="#eee"/><circle cx="4" cy="4" r="1.700" fill="#fff" stroke="#df6c37"/>',
    '3dosnap': '<path d="M4 6l3-3h7v7l-3 3H4z" fill="#eee"/><circle cx="4" cy="13" r="1.700" fill="#fff" stroke="#df6c37"/>',
    otrack: '<path d="M13 3L3 12h11" stroke="#173344" stroke-width="1.500"/>',
    ducs: '<path d="M3 2v11h11M3 13l9-8" stroke="#555"/><path d="M13 1L9 6h3l-1 3 4-5h-2z" fill="#f0a52f" stroke="none"/>',
    dyn: '<path d="M2 7h8M6 4v6M8 9h6v3H8z" stroke="#222"/>',
    lwt: '<path d="M2 8h12" stroke="#111" stroke-width="2"/><path d="M8 3v9" stroke="#111"/>',
    tpy: '<path d="M3 3h11v10H3z" fill="#8fc8ef" stroke="#2879b8" stroke-dasharray="1.500 1"/><path d="M4 6l3-3M4 10l7-7M6 12l8-8M10 12l4-4" stroke="#fff"/>',
    qp: '<path d="M4 3h8v10H4zM6 6h4v5H6z" stroke="#222"/>',
    sc: '<path d="M3 3h7v7H3zM1 5h6"/><path d="M8 8h6v6H8z" fill="#7fbf5e" stroke="#34751d"/>',
    leaf: '<path d="M4 3h6l3 3v7H4z" fill="#eee"/>',
    mic: '<path d="M6 4q2-3 4 0v5q-2 2-4 0zM4 8q0 4 4 4t4-4M8 12v3"/>',
    paint: '<path d="M1.500 9q1-6 8-6 5 1 4 4-3 1-2 4-4 4-8 2-2-1-2-4z" fill="#c3e2f0" stroke="#8fc4dd"/><g stroke="none"><circle cx="4.500" cy="8" r="1.200" fill="#4b9b45"/><circle cx="7" cy="5.500" r="1.200" fill="#e0962f"/><circle cx="5.500" cy="11" r="1.200" fill="#3768b5"/><circle cx="9" cy="10.500" r="1.200" fill="#c94434"/></g><path d="M14.500 2L10 12" stroke="#d98c34" stroke-width="1.700"/>',
    acad: '<path d="M1 9h14v5H1z" fill="#777" stroke="none"/><path d="M9 4l6 1v9H8z" fill="#b5b5b5" stroke="none"/><path d="M2 11L6 1h2l5 9-3 1-1-2-4 1-1 2z" fill="#dd242b" stroke="none"/><path d="M6 8l1-3 1 2z" fill="#fff" stroke="none"/>',
    edge: '<path d="M2.500 8q1-5.500 6-5.500 5 .500 5 6.500H5M5 8q2-5 5.500-1M5 8q-1 6 8 4" stroke="#0f82e6" stroke-width="2.300"/>'
};

document.querySelectorAll('[data-icons]').forEach(el => {
    el.innerHTML = el.dataset.icons.split(' ').map(name => {
        if (name === '-') return '<i class="sep"></i>';
        const on = name.endsWith('*');
        const key = name.replace('*', '');
        return `<svg class="ico ic-${key}${on ? ' on' : ''}" viewBox="0 0 16 16">${icons[key]}</svg>`;
    }).join('');
});

// AutoCAD color index: 24 hues in steps of 15 degrees, five brightness levels
function aciColor(hue, value, tint) {
    const channel = n => {
        const k = (n + hue / 60) % 6;
        const sat = tint ? 0.5 : 1;
        return Math.round(value * (1 - sat * Math.max(0, Math.min(k, 4 - k, 1))));
    };
    return `rgb(${channel(5)}, ${channel(3)}, ${channel(1)})`;
}

function fillPalette(id, levels, tint) {
    let html = '';
    levels.forEach((value, row) => {
        for (let col = 0; col < 24; col++) {
            const picked = !tint && row === 3 && col === 15 ? ' class="picked"' : '';
            html += `<i${picked} style="background:${aciColor(col * 15, value, tint)}"></i>`;
        }
    });
    document.getElementById(id).innerHTML = html;
}

function fillChips(id, colors) {
    document.getElementById(id).innerHTML = colors.map(c => `<i style="background:${c}"></i>`).join('');
}

fillPalette('paletteEven', [76, 127, 153, 204, 255], false);
fillPalette('paletteOdd', [255, 204, 153, 127, 76], true);
fillChips('chips', ['#f00', '#ff0', '#0f0', '#0ff', '#00f', '#f0f', '#fff', '#808080', '#c0c0c0']);
fillChips('grays', ['#333', '#5b5b5b', '#848484', '#adadad', '#d6d6d6', '#fff']);
```
